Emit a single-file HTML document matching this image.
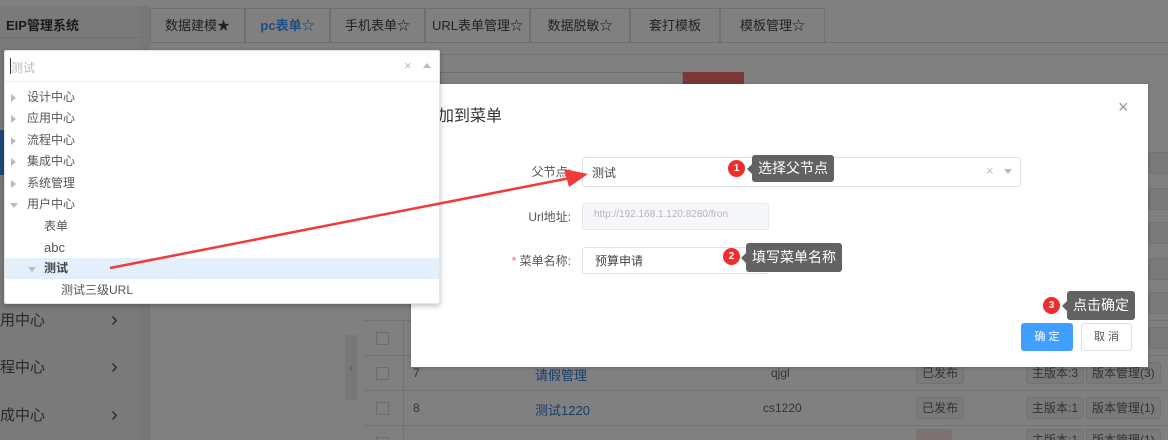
<!DOCTYPE html>
<html style="background:#808080"><head><meta charset="utf-8"><style>
*{box-sizing:border-box;margin:0;padding:0}
html,body{width:1168px;height:440px;overflow:hidden}
body{font-family:"Liberation Sans","Noto Sans CJK SC",sans-serif;font-size:12px;color:#333;position:relative;background:#808080}
#wrap{position:absolute;left:0;top:0;width:1168px;height:440px;overflow:hidden;background:#808080}
.a{position:absolute;white-space:nowrap}
.tab{position:absolute;top:8px;height:34px;border:1px solid #6f6f6f;border-bottom:none;background:#808080;color:#222;font-size:13px;line-height:33px;text-align:center}
.tr{position:absolute;left:5px;width:434px;height:21px;line-height:21px;font-size:12px;color:#555}
.tri{position:absolute;left:6px;top:7px;width:0;height:0;border-left:5px solid #bbb;border-top:4px solid transparent;border-bottom:4px solid transparent}
.trd{position:absolute;top:9px;width:0;height:0;border-top:5px solid #bbb;border-left:4px solid transparent;border-right:4px solid transparent}
.badge{position:absolute;width:17px;height:17px;border-radius:50%;background:#f02c2c;color:#fff;font-size:10px;text-align:center;line-height:17px;font-weight:bold}
.tip{position:absolute;background:#626262;color:#fff;font-size:14px;border-radius:3px;padding:0 6px}
.tip:before{content:"";position:absolute;left:-5px;top:50%;margin-top:-5px;border-right:5px solid #626262;border-top:5px solid transparent;border-bottom:5px solid transparent}
.row{position:absolute;left:363px;width:805px;height:35px;border-top:1px solid #747474}
.cb{position:absolute;left:13px;top:11px;width:13px;height:13px;border:1px solid #6e6e6e;background:#808080}
.gb{position:absolute;height:22px;border:1px solid #727272;border-radius:3px;background:#7a7a7a;color:#333;font-size:12px;line-height:20px;padding:0 5px}
</style></head><body><div id="wrap">
<svg class="a" style="left:0;top:0" width="1168" height="440"><rect x="0" y="0" width="1168" height="440" fill="#808080"/><rect x="0" y="6" width="140" height="434" fill="#7a7a7a"/><rect x="140" y="6" width="10" height="434" fill="#777"/></svg>
<div class="a" style="left:0;top:6px;width:140px;height:32px;border-bottom:1px solid #707070"></div>
<div class="a" style="left:6px;top:15px;font-size:13px;font-weight:bold;color:#1a1a1a">EIP管理系统</div>
<div class="a" style="left:0;top:130px;width:4px;height:45px;background:#1e4a77"></div>
<div class="a" style="left:150px;top:42px;width:1018px;height:1px;background:#6e6e6e"></div>
<div class="a" style="left:150px;top:54px;width:1018px;height:1px;background:#747474"></div>
<div class="tab" style="left:150px;width:95px">数据建模★</div>
<div class="tab" style="left:245px;width:85px;color:#1b4f86;font-weight:bold">pc表单☆</div>
<div class="tab" style="left:330px;width:95px">手机表单☆</div>
<div class="tab" style="left:425px;width:105px">URL表单管理☆</div>
<div class="tab" style="left:530px;width:100px">数据脱敏☆</div>
<div class="tab" style="left:630px;width:90px">套打模板</div>
<div class="tab" style="left:720px;width:105px">模板管理☆</div>
<div class="a" style="left:440px;top:72px;width:243px;height:22px;border:1px solid #6e6e6e"></div>
<div class="a" style="left:683px;top:72px;width:61px;height:22px;background:#7b3636"></div>
<div class="a" style="left:0;top:310px;font-size:15px;line-height:22px;color:#2a2a2a">用中心</div>
<div class="a" style="left:0;top:357px;font-size:15px;line-height:22px;color:#2a2a2a">程中心</div>
<div class="a" style="left:0;top:405px;font-size:15px;line-height:22px;color:#2a2a2a">成中心</div>
<div class="a" style="left:111px;top:309px;font-size:20px;line-height:22px;color:#2a2a2a">›</div>
<div class="a" style="left:111px;top:356px;font-size:20px;line-height:22px;color:#2a2a2a">›</div>
<div class="a" style="left:111px;top:404px;font-size:20px;line-height:22px;color:#2a2a2a">›</div>
<div class="a" style="left:345px;top:335px;width:12px;height:65px;background:#787878;color:#5a5a5a;font-size:14px;line-height:65px;text-align:center">‹</div>
<div class="row" style="top:320px"><div class="cb"></div></div>
<div class="row" style="top:355px"><div class="cb"></div><span class="a" style="left:50px;top:10px">7</span><span class="a" style="left:172px;top:9px;color:#153f6b;font-size:13px">请假管理</span><span class="a" style="left:408px;top:10px">qjgl</span><div class="gb" style="left:553px;top:6px">已发布</div><div class="gb" style="left:663px;top:6px">主版本:3</div><div class="gb" style="left:723px;top:6px">版本管理(3)</div></div>
<div class="row" style="top:390px"><div class="cb"></div><span class="a" style="left:50px;top:10px">8</span><span class="a" style="left:172px;top:9px;color:#153f6b;font-size:13px">测试1220</span><span class="a" style="left:400px;top:10px">cs1220</span><div class="gb" style="left:553px;top:6px">已发布</div><div class="gb" style="left:663px;top:6px">主版本:1</div><div class="gb" style="left:723px;top:6px">版本管理(1)</div></div>
<div class="row" style="top:425px"><div class="cb"></div><div class="gb" style="left:553px;top:3px;background:#7e7171;width:36px"></div><div class="gb" style="left:663px;top:3px">主版本:1</div><div class="gb" style="left:723px;top:3px">版本管理(1)</div></div>
<div class="a" style="left:403px;top:320px;width:1px;height:120px;background:#747474"></div>
<div class="gb" style="left:1148px;top:152px;width:30px"></div>
<div class="gb" style="left:1148px;top:188px;width:30px"></div>
<div class="gb" style="left:1148px;top:222px;width:30px"></div>
<div class="gb" style="left:1148px;top:258px;width:30px"></div>
<div class="gb" style="left:1148px;top:292px;width:30px"></div>
<div class="gb" style="left:1148px;top:327px;width:30px"></div>
<div class="a" style="left:411px;top:84px;width:737px;height:283px;background:#fff;box-shadow:0 1px 4px rgba(0,0,0,.2)"></div>
<div class="a" style="left:422px;top:102px;font-size:16px;color:#333">添加到菜单</div>
<div class="a" style="left:1118px;top:97px;font-size:18px;color:#999">×</div>
<div class="a" style="left:520px;top:163px;width:51px;text-align:right;font-size:12px;color:#555">父节点:</div>
<div class="a" style="left:582px;top:157px;width:439px;height:30px;border:1px solid #dcdfe6;border-radius:3px"></div>
<div class="a" style="left:592px;top:164px;font-size:12px;color:#444">测试</div>
<div class="a" style="left:986px;top:163px;font-size:13px;color:#bbb">×</div>
<div class="a" style="left:1004px;top:169px;border-top:5px solid #bbb;border-left:4px solid transparent;border-right:4px solid transparent"></div>
<div class="a" style="left:510px;top:208px;width:61px;text-align:right;font-size:12px;color:#555">Url地址:</div>
<div class="a" style="left:582px;top:203px;width:187px;height:27px;border:1px solid #e4e7ed;border-radius:3px;background:#f5f7fa"></div>
<div class="a" style="left:594px;top:209px;font-size:10px;color:#b5b5b5">http://192.168.1.120:8280/fron</div>
<div class="a" style="left:500px;top:252px;width:71px;text-align:right;font-size:12px;color:#555"><span style="color:#f56c6c">*</span> 菜单名称:</div>
<div class="a" style="left:582px;top:247px;width:187px;height:27px;border:1px solid #dcdfe6;border-radius:3px"></div>
<div class="a" style="left:595px;top:252px;font-size:12px;color:#444">预算申请</div>
<div class="a" style="left:1021px;top:323px;width:52px;height:28px;background:#409eff;border-radius:3px;color:#fff;font-size:11px;text-align:center;line-height:28px">确 定</div>
<div class="a" style="left:1081px;top:323px;width:51px;height:28px;border:1px solid #dcdfe6;border-radius:3px;color:#555;font-size:11px;text-align:center;line-height:26px">取 消</div>
<div class="badge" style="left:728px;top:160px">1</div>
<div class="tip" style="left:752px;top:155px;height:27px;line-height:27px">选择父节点</div>
<div class="badge" style="left:723px;top:248px">2</div>
<div class="tip" style="left:746px;top:243px;height:29px;line-height:29px">填写菜单名称</div>
<div class="badge" style="left:1043px;top:297px">3</div>
<div class="tip" style="left:1067px;top:291px;height:29px;line-height:29px">点击确定</div>
<div class="a" style="left:4px;top:50px;width:436px;height:254px;background:#fff;border:1px solid #e4e4e4;border-radius:2px;box-shadow:0 2px 6px rgba(0,0,0,.25)"></div>
<div class="a" style="left:5px;top:81px;width:434px;height:1px;background:#eee"></div>
<div class="a" style="left:10px;top:58px;width:1px;height:16px;background:#333"></div>
<div class="a" style="left:11px;top:59px;font-size:12px;color:#bbb">测试</div>
<div class="a" style="left:404px;top:58px;font-size:13px;color:#bbb">×</div>
<div class="a" style="left:423px;top:63px;border-bottom:5px solid #bbb;border-left:4px solid transparent;border-right:4px solid transparent"></div>
<div class="tr" style="top:87px"><div class="tri"></div><span class="a" style="left:22px">设计中心</span></div>
<div class="tr" style="top:108px"><div class="tri"></div><span class="a" style="left:22px">应用中心</span></div>
<div class="tr" style="top:130px"><div class="tri"></div><span class="a" style="left:22px">流程中心</span></div>
<div class="tr" style="top:151px"><div class="tri"></div><span class="a" style="left:22px">集成中心</span></div>
<div class="tr" style="top:173px"><div class="tri"></div><span class="a" style="left:22px">系统管理</span></div>
<div class="tr" style="top:194px"><div class="trd" style="left:5px"></div><span class="a" style="left:22px">用户中心</span></div>
<div class="tr" style="top:216px"><span class="a" style="left:39px">表单</span></div>
<div class="tr" style="top:237px"><span class="a" style="left:39px;font-size:13px">abc</span></div>
<div class="tr" style="top:258px;background:#e3f0fb"><div class="trd" style="left:23px"></div><span class="a" style="left:39px;font-weight:bold;color:#444">测试</span></div>
<div class="tr" style="top:280px"><span class="a" style="left:56px">测试三级URL</span></div>
<svg class="a" style="left:0;top:0" width="1168" height="440"><line x1="110" y1="268" x2="570" y2="178" stroke="#f23a3a" stroke-width="2.5"/><polygon points="588,174 564,169 569,187" fill="#f23a3a"/></svg>
</div></body></html>
